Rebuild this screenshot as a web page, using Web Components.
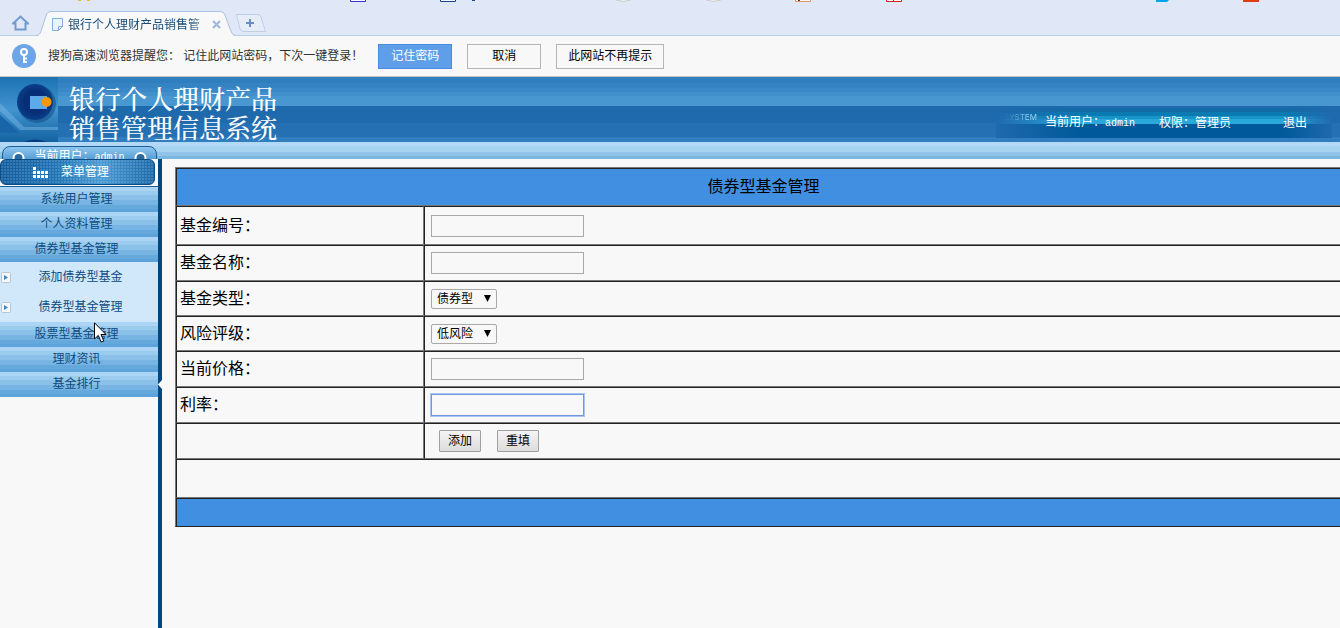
<!DOCTYPE html>
<html lang="zh-CN">
<head>
<meta charset="utf-8">
<title>银行个人理财产品销售管理信息系统</title>
<style>
html,body{margin:0;height:100%}
body{font:12px/16px "Liberation Sans","Noto Sans CJK SC",sans-serif;background:#f8f8f8;overflow:hidden}
</style>
</head>
<body>
<bank-app></bank-app>
<script>
const define = (name, html, setup) => customElements.define(name, class extends HTMLElement {
  connectedCallback() {
    if (this.shadowRoot) return;
    const t = document.createElement('template');
    t.innerHTML = html;
    this.attachShadow({ mode: 'open' }).append(t.content.cloneNode(true));
    if (setup) setup(this, this.shadowRoot);
  }
});

define('browser-tabs', `
<style>
:host{display:flex;height:36px;box-sizing:border-box;background:#e0e7f6;border-bottom:1px solid #b9cde6;position:relative;align-items:flex-end}
.marks{position:absolute;left:0;top:0}
button{border:0;padding:0;background:none;display:block}
.home{margin:0 8px 4px 12px}
.home svg,.add svg{display:block}
.tab{position:relative;width:198px;height:25px;display:flex;align-items:center;margin-bottom:-1px;box-sizing:border-box;padding:2px 14px 0 15px}
.tab>.shape{position:absolute;left:0;top:0}
.tab>*:not(.shape){position:relative}
.name{flex:1;margin-left:5px;white-space:nowrap;overflow:hidden;color:#174c78;-webkit-mask-image:linear-gradient(90deg,#000 88%,#0004)}
.close{margin-left:6px}
.add{margin:0 0 3px 1px}
</style>
<svg class="marks" width="1340" height="3" aria-hidden="true"><path d="M78 0h3v1h-3zM87 0h3v1h-3z" fill="#e3bd36"/><path d="M350.5 0v1.500h15V0" fill="#fff" stroke="#3535d5"/><path d="M440.500 0v1.500h15V0" fill="#fff" stroke="#17459b"/><path d="M472 0h3v1h-3z" fill="#17459b"/><path d="M616 0q7 3 15 0M706 0q7 3 15 0" fill="#eee" stroke="#ccc"/><path d="M795.500 0v1.500h15V0" fill="#fff" stroke="#ef9060"/><path d="M798 0h2v1h-2z" fill="#444"/><path d="M886.500 0v1.500h15V0M893.500 0v1" fill="#fff" stroke="#e11d1d"/><path d="M1156 0h13l-2 2h-11z" fill="#00a7e8"/><path d="M1243 0h16v2h-16z" fill="#e53a0c"/></svg>
<button class="home" aria-label="主页"><svg width="17" height="16"><path d="M1 8.500L8.500 1.500L16 8.500H13.500V14.500H3.500V8.500Z" fill="none" stroke="#709bcc" stroke-width="2"/></svg></button>
<div class="tab"><svg class="shape" width="198" height="25"><path d="M0 25C4 24 4 20 6 14L9 5Q10 .5 14 .5H183Q187 .5 188 4L193 18Q195 24 198 25Z" fill="#f8f8f8"/><path d="M0 24.500C4 23 4 20 6 14L9 5Q10 .5 14 .5H183Q187 .5 188 4L193 18Q195 24 198 24.500" fill="none" stroke="#a9c2e2"/></svg>
<svg width="11" height="13"><path d="M.5.5h10v8l-4 4h-6zM6.500 12.500v-4h4" fill="#e9f2ff" stroke="#84ade4"/></svg><span class="name">银行个人理财产品销售管</span><button class="close" aria-label="关闭"><svg width="9" height="9"><path d="M1 1l7 7M8 1L1 8" stroke="#9db7da" stroke-width="2"/></svg></button></div>
<button class="add" aria-label="新标签页"><svg width="30" height="18"><path d="M.5.5H21Q24 .5 25 3L29.500 17.500H8Q5 17.500 4 15Z" fill="#e6edf9" stroke="#bdcfe8"/><path d="M10 9h8M14 5v8" stroke="#6b8ec0" stroke-width="2"/></svg></button>`);

define('password-bar', `
<style>
:host{display:flex;align-items:center;height:41px;box-sizing:border-box;padding-left:12px;background:#f8f8f8;border-bottom:1px solid #c5c5c5;color:#333}
svg{flex:none;margin-right:12px}
span{white-space:pre;margin-right:15px}
button{font:12px/16px "Liberation Sans","Noto Sans CJK SC",sans-serif;box-sizing:border-box;height:25px;min-width:74px;padding:0 11px;margin-right:15px;border:1px solid #b5b5b5;background:#f8f8f8;color:#000}
.main{background:#5f9fe9;border-color:#468be4;color:#fff}
</style>
<svg width="24" height="24"><circle cx="12" cy="12" r="12" fill="#6da6e8"/><circle cx="12" cy="8" r="3" fill="none" stroke="#fff" stroke-width="2"/><path d="M12 11v8M12 14.500h3M12 18h3" stroke="#fff" stroke-width="2"/></svg>
<span>搜狗高速浏览器提醒您： 记住此网站密码，下次一键登录！</span><button class="main">记住密码</button><button>取消</button><button>此网站不再提示</button>`);

define('site-header', `
<style>
:host{display:block}
.top{display:flex;height:65px;background:linear-gradient(#2f7fbe 0 6px,#3583c3 6px 11px,#3b88c8 11px 15px,#418fcb 15px 19px,#4897d1 19px 29px,#1f69ad 29px 46px,#2470b3 46px 60px,#307dc0 60px)}
.logo{flex:none}
h1{margin:0 0 0 11px;padding-top:6px;font:500 26px/29px "Noto Serif CJK SC","Noto Sans CJK SC",serif;color:#fff;white-space:nowrap}
.info{margin:31px 8px 4px auto;width:336px;box-sizing:border-box;display:flex;align-items:center;padding-left:8px;color:#fff;white-space:nowrap;
background:linear-gradient(90deg,#1f69ad,#1f69ad00 25% 85%,#1f69ad),linear-gradient(#116ba4 0 4px,#0b7ab0 4px 8px,#1795c8 8px 11px,#29a8da 11px 16px,#00599a 16px)}
.info i{font:8px/8px Inter,sans-serif;color:#91c7e5;align-self:flex-start;margin-top:5px;width:41px;background:linear-gradient(90deg,#91c7e500,#a3d7ef 60%);background-clip:text;color:transparent}
.mono{font-family:"Liberation Mono",monospace;font-size:10px}
.role{margin-left:24px}
a{color:#fff;text-decoration:none;margin-left:auto;margin-right:25px}
.sub{height:17px;overflow:hidden;background:linear-gradient(#b2d8f5 0 4px,#a6d3ef 4px 10px,#8fc4e8 10px 14px,#7ab7df 14px)}
.user{margin:4px 0 0 2px;width:155px;box-sizing:border-box;height:22px;border:1px solid #1d5f98;border-radius:8px;background:linear-gradient(#8fc6ef,#4d98d0 70%);display:flex;justify-content:space-between;padding:2px 9px;color:#fff;align-items:center}
</style>
<div class="top"><svg class="logo" width="58" height="65"><defs><linearGradient id="g" x2="0" y2="1"><stop stop-color="#1c73b2"/><stop offset=".5" stop-color="#4294d0"/><stop offset="1" stop-color="#12639f"/></linearGradient><radialGradient id="c"><stop offset=".6" stop-color="#062e76"/><stop offset="1" stop-color="#0a3f88"/></radialGradient></defs><path d="M0 0h58v65H0z" fill="url(#g)"/><path d="M0 26l24 24h34v3H20L0 34z" fill="#75b4e2" opacity=".5"/><path d="M0 38l20 18H0z" fill="#1965a9"/><circle cx="37" cy="27" r="19" fill="#0b4680" opacity=".5"/><circle cx="35" cy="25" r="18" fill="url(#c)"/><path d="M30 19h17v13H30z" fill="#5daaeb"/><circle cx="46.500" cy="25" r="5" fill="#ff950b"/><path d="M24 65q11-5 23 0" fill="#073b7e"/></svg>
<h1>银行个人理财产品<br>销售管理信息系统</h1>
<div class="info"><i>SYSTEM</i><span>当前用户：<span class="mono">admin</span></span><span class="role">权限：管理员</span><a href="#">退出</a></div></div>
<div class="sub"><div class="user"><svg width="13" height="13"><circle cx="6.500" cy="7" r="5" fill="#28699e" stroke="#fff" stroke-width="2"/></svg><span>当前用户：<span class="mono">admin</span></span><svg width="13" height="13"><circle cx="6.500" cy="7" r="5" fill="#28699e" stroke="#fff" stroke-width="2"/></svg></div></div>`);

define('menu-item', `
<style>
:host{display:block}
a{display:block;box-sizing:border-box;height:25px;padding-right:5px;line-height:24px;text-align:center;text-decoration:none;color:#0b4b7f;background:linear-gradient(#acd4f5 0 4px,#9bcbed 4px 8px,#8bc0e9 8px 13px,#78b4e3 13px 18px,#65a9dc 18px 22px,#5ba3da 22px)}
:host([sub]) a{height:30px;line-height:30px;padding:0 8px 0 1px;background:#d0e8f9;display:flex;align-items:center}
svg{display:none;flex:none}
:host([sub]) svg{display:block}
:host([sub]) span{flex:1}
</style>
<a href="#"><svg width="10" height="11"><rect x=".5" y=".5" width="9" height="10" rx="1" fill="#f4f8fb" stroke="#b6c7d3"/><path d="M3 3l4 2.500L3 8z" fill="#3689ca"/></svg><span><slot></slot></span></a>`);

define('side-menu', `
<style>
:host{display:block;width:158px;flex:none;border-right:4px solid #00477f;position:relative}
h2{margin:0;height:26px;width:155px;box-sizing:border-box;border:1px solid #0b4c83;border-radius:6px;display:flex;align-items:center;justify-content:center;gap:13px;padding-right:13px;font:12px/16px "Liberation Sans","Noto Sans CJK SC",sans-serif;color:#fff;background:radial-gradient(circle at 1px 1px,#ffffff26 1px,transparent 1px) 0 0/3px 3px,linear-gradient(90deg,#135e9e,#1f73b4 35%,#4a9bd3 65%,#1b69aa)}
nav{border-top:1px solid #1a6098;margin-top:1px}
.fold{position:absolute;left:158px;top:221px;border:0;padding:0;width:4px;height:9px;background:#fff;clip-path:polygon(0 50%,100% 0,100% 100%)}
</style>
<h2><svg width="15" height="11"><path d="M0 0h3v3H0zM0 4h3v3H0zM4 4h3v3H4zM8 4h3v3H8zM12 4h3v3h-3zM0 8h3v3H0zM4 8h3v3H4zM8 8h3v3H8zM12 8h3v3h-3z" fill="#fff"/></svg>菜单管理</h2>
<nav><menu-item>系统用户管理</menu-item><menu-item>个人资料管理</menu-item><menu-item>债券型基金管理</menu-item><menu-item sub>添加债券型基金</menu-item><menu-item sub>债券型基金管理</menu-item><menu-item>股票型基金管理</menu-item><menu-item>理财资讯</menu-item><menu-item>基金排行</menu-item></nav>
<button class="fold" aria-label="收起菜单"></button>`);

define('fund-form', `
<style>
:host{display:block;flex:1;min-width:0;padding:8px 0 0 13px}
table{width:calc(100% + 13px);border-spacing:0;table-layout:fixed;border:solid;border-width:1px 0 1px 1px;border-color:#777 #777 #222;font-size:16px;line-height:20px}
col:first-child{width:248px}
th,td{box-sizing:border-box;height:36px;padding:0 6px;border:solid;border-width:1px 0;border-color:#222 #222 #777;font-weight:400;text-align:left;white-space:nowrap}
th{border-left:1px solid #222;border-right:1px solid #777;padding-left:3px}
td{border-left:1px solid #222}
.head,.foot{background:#418fe1}
.head{height:38px;text-align:center;border-right:0}
.tall>*{height:39px}
.short>*{height:35px}
.foot{height:28px;border-bottom:0}
input,select,button{font:12px/16px "Liberation Sans","Noto Sans CJK SC",sans-serif;box-sizing:border-box;display:block;color:#000}
input{width:153px;height:22px;padding:1px 3px;border:1px solid #a9a9a9;background:#f8f8f8;outline:0}
input.active{border-color:#6f99dc;box-shadow:0 0 0 1px #a9c6f4}
.pick{position:relative;display:block;width:66px}
select{appearance:none;width:66px;height:20px;padding:0 5px;border:1px solid #a9a9a9;border-radius:2px;background:#f8f8f8}
.pick svg{position:absolute;right:6px;top:6px;pointer-events:none}
.acts{display:flex;gap:16px;padding-left:8px}
button{width:42px;height:22px;padding:0;border:1px solid #a0a0a0;border-radius:1px;background:linear-gradient(#f4f4f4,#dcdcdc)}
</style>
<form><table><colgroup><col><col></colgroup><tbody>
<tr><th class="head" colspan="2">债券型基金管理</th></tr>
<tr class="tall"><th><label for="no">基金编号：</label></th><td><input id="no"></td></tr>
<tr><th><label for="name">基金名称：</label></th><td><input id="name"></td></tr>
<tr class="short"><th><label for="type">基金类型：</label></th><td><span class="pick"><select id="type"><option>债券型</option></select><svg width="7" height="7"><path d="M0 0h7L3.500 7z"/></svg></span></td></tr>
<tr class="short"><th><label for="risk">风险评级：</label></th><td><span class="pick"><select id="risk"><option>低风险</option></select><svg width="7" height="7"><path d="M0 0h7L3.500 7z"/></svg></span></td></tr>
<tr><th><label for="price">当前价格：</label></th><td><input id="price"></td></tr>
<tr><th><label for="rate">利率：</label></th><td><input id="rate" class="active"></td></tr>
<tr><th></th><td><div class="acts"><button type="button">添加</button><button type="reset">重填</button></div></td></tr>
<tr class="tall"><td colspan="2"></td></tr>
<tr><td class="foot" colspan="2"></td></tr>
</tbody></table></form>`);

define('bank-app', `
<style>
:host{display:flex;flex-direction:column;min-height:100vh;position:relative;overflow:hidden}
main{display:flex;flex:1}
.cursor{position:absolute;left:94px;top:322px;pointer-events:none}
</style>
<browser-tabs></browser-tabs><password-bar></password-bar><site-header></site-header>
<main><side-menu></side-menu><fund-form></fund-form></main>
<svg class="cursor" width="13" height="21" aria-hidden="true"><path d="M.5.8V17L4.300 13.400L7.200 20L9.800 18.900L7 12.500H12Z" fill="#fff" stroke="#000"/></svg>`);
</script>
</body>
</html>
